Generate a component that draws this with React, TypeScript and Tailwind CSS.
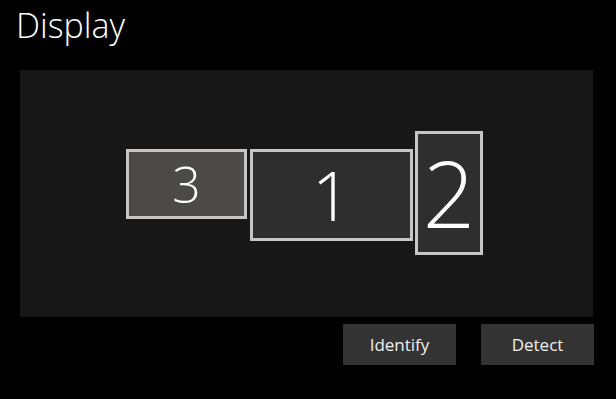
import React from 'react';

type Monitor = {
  id: string;
  left: string;
  fill: string;
  size: string;
};

// monitor placement on the arrangement canvas
const MONITORS: Monitor[] = [
  { id: '3', left: 'left-[106px] top-[79px] w-[121px] h-[70px]', fill: 'bg-[#4b4a49]', size: 'text-[50px]' },
  { id: '1', left: 'left-[230px] top-[79px] w-[163px] h-[92px]', fill: 'bg-[#2e2e2e]', size: 'text-[68px]' },
  { id: '2', left: 'left-[395px] top-[61px] w-[68px] h-[124px]', fill: 'bg-[#2e2e2e]', size: 'text-[92px]' },
];

function App() {
  return (
    <div
      className="w-[616px] h-[399px] bg-black text-white overflow-hidden"
      style={{ fontFamily: '"Open Sans", "Noto Sans", sans-serif' }}
    >
      <h1 className="pl-[16px] pt-[8px] h-[70px] text-[34px] font-light leading-none">Display</h1>

      {/* Arrangement canvas */}
      <div className="relative ml-[20px] w-[573px] h-[247px] bg-[#171717]">
        {MONITORS.map((m) => (
          <div
            key={m.id}
            className={`absolute ${m.left} ${m.fill} border-[3px] border-[#c6c6c6] flex items-center justify-center font-light leading-none ${m.size}`}
          >
            {m.id}
          </div>
        ))}
      </div>

      <div className="flex justify-end gap-[25px] w-[594px] mt-[7px]">
        <button className="w-[113px] h-[41px] bg-[#333333] text-[17px] text-[#f0f0f0]">Identify</button>
        <button className="w-[113px] h-[41px] bg-[#333333] text-[17px] text-[#f0f0f0]">Detect</button>
      </div>
    </div>
  );
}

export default App;
